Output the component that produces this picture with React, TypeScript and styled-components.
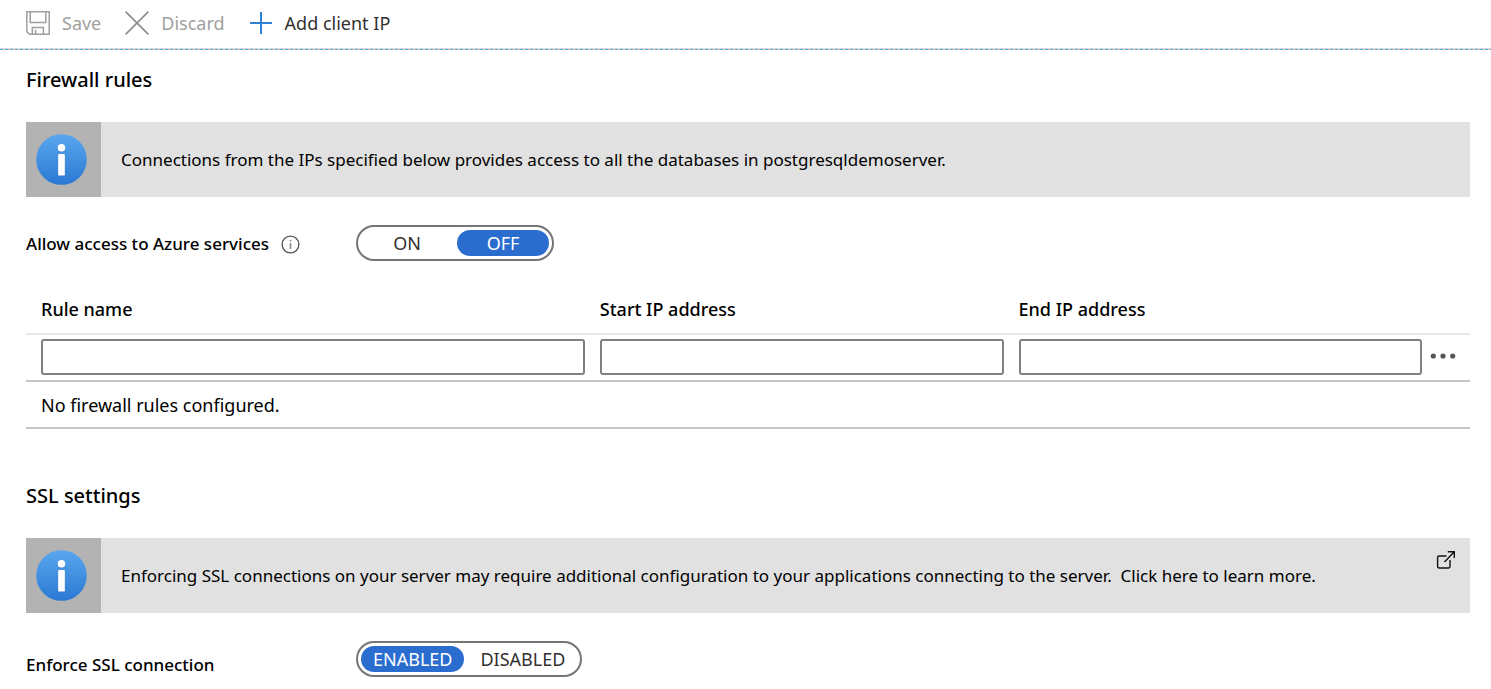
import React, { useState } from "react";
import styled, { createGlobalStyle, css } from "styled-components";

const GlobalStyle = createGlobalStyle`
  *, *::before, *::after { box-sizing: border-box; }
  body {
    margin: 0;
    background: #fff;
    color: #000;
    font-family: "Noto Sans", "Open Sans", sans-serif;
    font-size: 18px;
    line-height: 24px;
  }
  button, input { font: inherit; }
`;

const Toolbar = styled.header`
  display: flex;
  align-items: center;
  gap: 24px;
  height: 50px;
  padding: 0 26px 5px;
  background:
    repeating-linear-gradient(90deg, #4aace0 0 3px, #d6cfca 3px 5px) bottom / 100% 1px no-repeat,
    linear-gradient(#dcd7d3, #dcd7d3) bottom / 100% 2px no-repeat;
`;

const ToolButton = styled.button`
  display: flex;
  align-items: center;
  gap: 12px;
  padding: 0;
  border: 0;
  background: none;
  color: #323130;
  white-space: nowrap;

  &:disabled { color: #a19f9d; }
`;

const Content = styled.main`
  padding: 18px 21px 12px 26px;
`;

const Section = styled.section`
  & + & { margin-top: 55px; }
`;

const Heading = styled.h2`
  margin: 0 0 30px;
  font-size: 20px;
  font-weight: 500;
  line-height: 24px;
`;

const Banner = styled.div`
  display: flex;
  min-height: 75px;
  margin-bottom: 28px;
  background: #e1e1e1;
`;

const BannerIcon = styled.div`
  display: flex;
  flex: none;
  align-items: center;
  justify-content: center;
  width: 75px;
  padding-right: 4px;
  background: #b3b3b3;
`;

const BannerText = styled.p`
  flex: 1;
  align-self: center;
  margin: 0;
  padding: 0 20px;
  font-size: 17px;
`;

const BannerLink = styled.a`
  align-self: flex-start;
  margin: 12px 14px 0 0;
  color: #111;
  line-height: 0;
`;

const SettingRow = styled.div<{ $align: "center" | "flex-end" }>`
  display: flex;
  align-items: ${(p) => p.$align};
`;

const SettingLabel = styled.div`
  display: flex;
  align-items: center;
  gap: 12px;
  width: 330px;
  padding-top: 2px;
  font-size: 17px;
  font-weight: 500;
`;

const Switch = styled.div`
  display: flex;
  gap: 4px;
  padding: 3px;
  border: 2px solid #757575;
  border-radius: 18px;
`;

const Option = styled.label<{ $selected: boolean }>`
  min-width: 92px;
  height: 26px;
  padding: 0 12px;
  border-radius: 13px;
  color: #323130;
  line-height: 26px;
  text-align: center;
  cursor: pointer;

  ${(p) =>
    p.$selected &&
    css`
      background: #2b6ccf;
      color: #fff;
    `}

  &:focus-within { outline: 1px dotted #323130; }
`;

const HiddenRadio = styled.input`
  position: absolute;
  width: 1px;
  height: 1px;
  margin: 0;
  opacity: 0;
`;

const Table = styled.table`
  width: 100%;
  margin-top: 24px;
  border-spacing: 0;
  table-layout: fixed;
`;

const Column = styled.col<{ $width?: string }>`
  width: ${(p) => p.$width ?? "auto"};
`;

const HeaderCell = styled.th`
  height: 50px;
  padding: 0 0 0 15px;
  border-bottom: 2px solid #e8e8e8;
  font-weight: 500;
  text-align: left;
`;

const Cell = styled.td<{ $flush?: boolean }>`
  height: 47px;
  padding: 0 0 0 ${(p) => (p.$flush ? 8 : 15)}px;
  border-bottom: 2px solid #c6c6c6;
`;

const EditRow = styled.tr`
  & > ${Cell} { padding-bottom: 2px; }
`;

const TextBox = styled.input`
  display: block;
  width: 100%;
  height: 36px;
  padding: 0 8px;
  border: 2px solid #808080;
  border-radius: 3px;
  background: #fff;
`;

const MoreButton = styled.button`
  display: block;
  padding: 0 0 2px;
  border: 0;
  background: none;
  line-height: 0;
`;

const SaveIcon = () => (
  <svg width="24" height="24" viewBox="0 0 24 24" fill="none" stroke="#a0a0a0" strokeWidth="1.5" aria-hidden="true">
    <path d="M.8.8H23.2V23.2H3.4L.8 20.6Z" />
    <path d="M4.2 1V11.5H19.8V1M6.3 23V16.6H17.4V23M9.6 18.8V23" />
  </svg>
);

const DiscardIcon = () => (
  <svg width="24" height="24" viewBox="0 0 24 24" fill="none" stroke="#8c8c8c" strokeWidth="1.6" aria-hidden="true">
    <path d="M.6.6 23.4 23.4M23.4.6.6 23.4" />
  </svg>
);

const AddIcon = () => (
  <svg width="24" height="24" viewBox="0 0 24 24" fill="none" stroke="#2f7fd6" strokeWidth="2" aria-hidden="true">
    <path d="M12 1V23M1 12H23" />
  </svg>
);

const InfoBadge = ({ id }: { id: string }) => (
  <svg width="51" height="51" viewBox="0 0 52 52" aria-hidden="true">
    <defs>
      <linearGradient id={id} x1="0" y1="0" x2="0" y2="1">
        <stop offset="0" stopColor="#5aa7ee" />
        <stop offset="1" stopColor="#2a78d2" />
      </linearGradient>
    </defs>
    <circle cx="26" cy="26" r="25.8" fill={`url(#${id})`} />
    <circle cx="26" cy="14" r="3.8" fill="#fff" />
    <rect x="22.6" y="20.4" width="6.8" height="22" rx="1.2" fill="#fff" />
  </svg>
);

const InfoIcon = () => (
  <svg width="19" height="19" viewBox="0 0 19 19" fill="none" role="img" aria-label="More information">
    <circle cx="9.5" cy="9.5" r="8.4" stroke="#555" strokeWidth="1.3" />
    <path d="M9.5 8V14M9.5 5V6.6" stroke="#888" strokeWidth="1.6" />
  </svg>
);

const ExternalIcon = () => (
  <svg width="20" height="20" viewBox="0 0 20 20" fill="none" stroke="currentColor" strokeWidth="1.4" aria-hidden="true">
    <path d="M10.5 6H3Q1.6 6 1.6 7.4V16.6Q1.6 18 3 18H12.6Q14 18 14 16.6V10" />
    <path d="M8.5 12 18.2 1.8M11.8 1.7H18.3V8" />
  </svg>
);

const MoreIcon = () => (
  <svg width="26" height="6" viewBox="0 0 26 6" fill="#555" aria-hidden="true">
    <circle cx="3.3" cy="3" r="2.6" />
    <circle cx="13" cy="3" r="2.6" />
    <circle cx="22.7" cy="3" r="2.6" />
  </svg>
);

type ToggleProps = {
  name: string;
  label: string;
  options: string[];
  initial: string;
};

function Toggle({ name, label, options, initial }: ToggleProps) {
  const [value, setValue] = useState(initial);
  return (
    <Switch role="radiogroup" aria-label={label}>
      {options.map((option) => (
        <Option key={option} $selected={option === value}>
          <HiddenRadio
            type="radio"
            name={name}
            value={option}
            checked={option === value}
            onChange={() => setValue(option)}
          />
          {option}
        </Option>
      ))}
    </Switch>
  );
}

const columns = ["Rule name", "Start IP address", "End IP address"];

export default function App() {
  return (
    <>
      <GlobalStyle />
      <Toolbar>
        <ToolButton type="button" disabled>
          <SaveIcon />
          Save
        </ToolButton>
        <ToolButton type="button" disabled>
          <DiscardIcon />
          Discard
        </ToolButton>
        <ToolButton type="button">
          <AddIcon />
          Add client IP
        </ToolButton>
      </Toolbar>
      <Content>
        <Section>
          <Heading>Firewall rules</Heading>
          <Banner>
            <BannerIcon>
              <InfoBadge id="firewall-info" />
            </BannerIcon>
            <BannerText>
              Connections from the IPs specified below provides access to all the databases in postgresqldemoserver.
            </BannerText>
          </Banner>
          <SettingRow $align="center">
            <SettingLabel>
              Allow access to Azure services
              <InfoIcon />
            </SettingLabel>
            <Toggle name="azure-access" label="Allow access to Azure services" options={["ON", "OFF"]} initial="OFF" />
          </SettingRow>
          <Table>
            <colgroup>
              <Column $width="38.7%" />
              <Column $width="29%" />
              <Column />
              <Column $width="48px" />
            </colgroup>
            <thead>
              <tr>
                {columns.map((column) => (
                  <HeaderCell key={column} scope="col">
                    {column}
                  </HeaderCell>
                ))}
                <HeaderCell as="td" />
              </tr>
            </thead>
            <tbody>
              <EditRow>
                {columns.map((column) => (
                  <Cell key={column}>
                    <TextBox type="text" aria-label={column} />
                  </Cell>
                ))}
                <Cell $flush>
                  <MoreButton type="button" aria-label="More actions">
                    <MoreIcon />
                  </MoreButton>
                </Cell>
              </EditRow>
              <tr>
                <Cell colSpan={4}>No firewall rules configured.</Cell>
              </tr>
            </tbody>
          </Table>
        </Section>
        <Section>
          <Heading>SSL settings</Heading>
          <Banner>
            <BannerIcon>
              <InfoBadge id="ssl-info" />
            </BannerIcon>
            <BannerText>
              Enforcing SSL connections on your server may require additional configuration to your applications
              connecting to the server.&nbsp; Click here to learn more.
            </BannerText>
            <BannerLink href="#ssl" aria-label="Learn more about SSL connections">
              <ExternalIcon />
            </BannerLink>
          </Banner>
          <SettingRow $align="flex-end">
            <SettingLabel>Enforce SSL connection</SettingLabel>
            <Toggle
              name="enforce-ssl"
              label="Enforce SSL connection"
              options={["ENABLED", "DISABLED"]}
              initial="ENABLED"
            />
          </SettingRow>
        </Section>
      </Content>
    </>
  );
}
